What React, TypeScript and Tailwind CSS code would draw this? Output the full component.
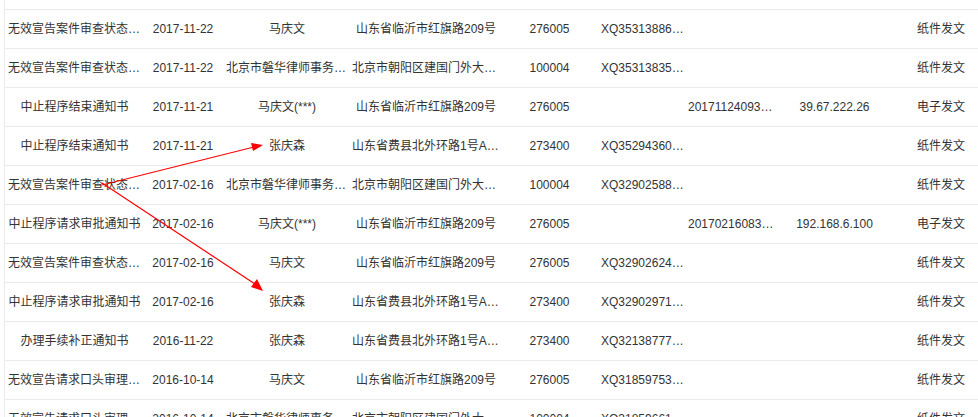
import React from "react";

type Row = {
  title: string;
  date: string;
  name: string;
  address: string;
  zip: string;
  track: string;
  serial: string;
  ip: string;
  mode: string;
};

const LAW = "北京市磐华律师事务所（普通合伙）";
const BJ = "北京市朝阳区建国门外大街22号";
const FX = "山东省费县北外环路1号A座1单元";
const LY = "山东省临沂市红旗路209号";

const rows: Row[] = [
  { title: "无效宣告案件审查状态通知书", date: "2017-11-22", name: "马庆文", address: LY, zip: "276005", track: "XQ353138861CN", serial: "", ip: "", mode: "纸件发文" },
  { title: "无效宣告案件审查状态通知书", date: "2017-11-22", name: LAW, address: BJ, zip: "100004", track: "XQ353138359CN", serial: "", ip: "", mode: "纸件发文" },
  { title: "中止程序结束通知书", date: "2017-11-21", name: "马庆文(***)", address: LY, zip: "276005", track: "", serial: "2017112409312345", ip: "39.67.222.26", mode: "电子发文" },
  { title: "中止程序结束通知书", date: "2017-11-21", name: "张庆森", address: FX, zip: "273400", track: "XQ352943605CN", serial: "", ip: "", mode: "纸件发文" },
  { title: "无效宣告案件审查状态通知书", date: "2017-02-16", name: LAW, address: BJ, zip: "100004", track: "XQ329025884CN", serial: "", ip: "", mode: "纸件发文" },
  { title: "中止程序请求审批通知书", date: "2017-02-16", name: "马庆文(***)", address: LY, zip: "276005", track: "", serial: "2017021608354321", ip: "192.168.6.100", mode: "电子发文" },
  { title: "无效宣告案件审查状态通知书", date: "2017-02-16", name: "马庆文", address: LY, zip: "276005", track: "XQ329026243CN", serial: "", ip: "", mode: "纸件发文" },
  { title: "中止程序请求审批通知书", date: "2017-02-16", name: "张庆森", address: FX, zip: "273400", track: "XQ329029716CN", serial: "", ip: "", mode: "纸件发文" },
  { title: "办理手续补正通知书", date: "2016-11-22", name: "张庆森", address: FX, zip: "273400", track: "XQ321387772CN", serial: "", ip: "", mode: "纸件发文" },
  { title: "无效宣告请求口头审理通知书", date: "2016-10-14", name: "马庆文", address: LY, zip: "276005", track: "XQ318597535CN", serial: "", ip: "", mode: "纸件发文" },
  { title: "无效宣告请求口头审理通知书", date: "2016-10-14", name: LAW, address: BJ, zip: "100004", track: "XQ318596614CN", serial: "", ip: "", mode: "纸件发文" },
];

const cell = "shrink-0 truncate text-center";

export default function App() {
  return (
    <div
      className="relative w-[978px] h-[417px] overflow-hidden bg-white text-[12px] text-[#333]"
      style={{ fontFamily: '"Liberation Sans", Arial, "Noto Sans CJK SC", sans-serif' }}
    >
      <div className="ml-[4px] w-[990px] pt-[9px] border-l border-[#e8eaec]">
        {rows.map((r, i) => (
          <div key={i} className="flex h-[39px] items-center border-t border-[#e8eaec]">
            <div className={`${cell} w-[138px] pl-[3px] pr-[2px]`}>{r.title}</div>
            <div className={`${cell} w-[80px]`}>{r.date}</div>
            <div className={`${cell} w-[128px] px-[3px]`}>{r.name}</div>
            <div className={`${cell} w-[149px] pl-[1px]`}>{r.address}</div>
            <div className={`${cell} w-[99px]`}>{r.zip}</div>
            <div className={`${cell} w-[89px] pl-[2px]`}>{r.track}</div>
            <div className={`${cell} w-[88px]`}>{r.serial}</div>
            <div className={`${cell} w-[117px]`}>{r.ip}</div>
            <div className={`${cell} w-[96px]`}>{r.mode}</div>
          </div>
        ))}
      </div>

      {/* annotation arrows */}
      <svg className="absolute inset-0 pointer-events-none" width="978" height="417">
        <line x1="102" y1="185" x2="254" y2="147" stroke="#ff0000" strokeWidth="1.2" />
        <polygon points="263,145 251,143 253,151" fill="#ff0000" />
        <line x1="102" y1="183" x2="255" y2="284" stroke="#ff0000" strokeWidth="1.2" />
        <polygon points="263,291 251,287 257,279" fill="#ff0000" />
      </svg>
    </div>
  );
}
